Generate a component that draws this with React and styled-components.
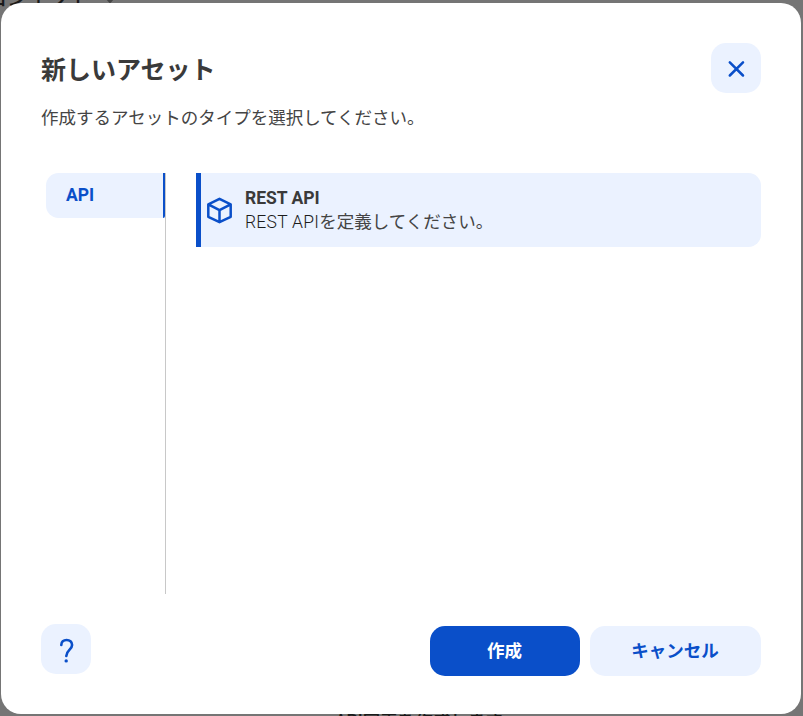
import styled, { createGlobalStyle } from "styled-components";

const GlobalStyle = createGlobalStyle`
  * {
    box-sizing: border-box;
  }
  body {
    margin: 0;
    background: #757575;
    color: #3a3a3a;
    font-family: Roboto, "Noto Sans CJK JP", sans-serif;
    font-size: 17.5px;
    overflow: hidden;
  }
  h2, p, ul {
    margin: 0;
    padding: 0;
  }
  button {
    border: 0;
    padding: 0;
    font: inherit;
    cursor: pointer;
  }
`
const Page = styled.div`
  position: relative;
  height: 716px;
  padding: 3px 2px 2px 1px;
  overflow: hidden;
`
const BehindText = styled.span`
  position: absolute;
  left: ${({$left}) => $left}px;
  top: ${({$top}) => $top}px;
  color: #1a1a1a;
  font-size: ${({$size}) => $size}px;
  font-weight: 500;
  line-height: 24px;
  white-space: nowrap;
`
const BehindChevron = styled.svg`
  position: absolute;
  left: 104px;
  top: -4px;
`
const Dialog = styled.section`
  position: relative;
  display: flex;
  flex-direction: column;
  width: 800px;
  height: 711px;
  padding: 40px 40px 38px;
  background: #fff;
  border-radius: 20px;
`
const Header = styled.header`
  display: flex;
  justify-content: space-between;
  align-items: flex-start;
  height: 130px;
`
const Title = styled.h2`
  padding-top: 10px;
  font-size: 25px;
  font-weight: 700;
  line-height: 36px;
`
const Description = styled.p`
  margin-top: 16px;
  color: #444;
  line-height: 26px;
`
const IconButton = styled.button`
  display: flex;
  align-items: center;
  justify-content: center;
  width: 50px;
  height: 50px;
  color: #0a4fc9;
  background: #ebf2ff;
  border-radius: 15px;
`
const Content = styled.div`
  display: flex;
  gap: 30px;
  height: 421px;
`
const TabList = styled.ul`
  width: 125px;
  padding-left: 5px;
  border-right: 1px solid #c8c8c8;
  list-style: none;
`
const Tab = styled.li`
  height: 45px;
  padding-left: 20px;
  color: #0a4fc9;
  background: #ebf2ff;
  border-right: 2px solid #0a4fc9;
  border-radius: 12.5px 0 2px 12.5px;
  font-weight: 700;
  line-height: 44px;
`
const AssetOption = styled.div`
  display: flex;
  align-items: center;
  flex: 1;
  height: 74px;
  padding-left: 5px;
  background: #ebf2ff;
  border-left: 5px solid #0a4fc9;
  border-radius: 0 12.5px 12.5px 0;
`
const AssetText = styled.div`
  margin-left: 11px;
  line-height: 24px;
`
const AssetName = styled.p`
  font-weight: 700;
`
const AssetSummary = styled.p`
  color: #444;
`
const LightLatin = styled.span`
  color: #1c1c1c;
  font-weight: 300;
  letter-spacing: .25px;
`
const Footer = styled.footer`
  display: flex;
  justify-content: space-between;
  margin-top: 30px;
`
const Actions = styled.div`
  display: flex;
  gap: 10px;
  padding-top: 2px;
`
const ActionButton = styled.button`
  width: ${({$width}) => $width}px;
  height: 50px;
  padding: 0 1px 3px 0;
  color: ${({$primary}) => $primary ? '#fff' : '#0a4fc9'};
  background: ${({$primary}) => $primary ? '#0a4fc9' : '#ebf2ff'};
  border-radius: 15px;
  font-weight: 700;
`

const CloseIcon = () => (
  <svg width="20" height="20" viewBox="0 0 20 20" fill="none" stroke="currentColor" strokeWidth="2.5" strokeLinecap="round">
    <path d="M3.8 4.3 17 17.5M17 4.3 3.8 17.5" />
  </svg>
)
const HelpIcon = () => (
  <svg width="20" height="28" viewBox="0 0 20 28" fill="none" stroke="currentColor" strokeWidth="2.6" strokeLinecap="round">
    <path d="M5.3 9.9C5.3 6.8 7.5 5 10.6 5s5.5 1.9 5.5 5c0 4.8-5.8 5.2-5.8 11" />
    <circle cx="10.2" cy="25.9" r="1.7" fill="currentColor" stroke="none" />
  </svg>
)
const CubeIcon = () => (
  <svg width="28" height="28" viewBox="0 0 28 28" fill="none" stroke="currentColor" strokeWidth="2.5" strokeLinejoin="round" color="#0a4fc9">
    <path d="M13.5 2.8 24.7 8.3V20.8L13.5 26.2 2.3 20.8V8.3ZM2.3 8.3l11.2 5.8 11.2-5.8M13.5 14.1v12.1" />
  </svg>
)

export default function App() {
  return (
    <>
      <GlobalStyle />
      <Page>
        <BehindText $left={-35} $top={-14} $size={21}>プロジェクト</BehindText>
        <BehindChevron width="12" height="8" viewBox="0 0 12 8" fill="#444">
          <path d="M1 2h10L6 7.5Z" />
        </BehindChevron>
        <BehindText $left={335} $top={709} $size={17.5}>API定義を作成します</BehindText>
        <Dialog role="dialog" aria-modal="true">
          <Header>
            <div>
              <Title>新しいアセット</Title>
              <Description>作成するアセットのタイプを選択してください。</Description>
            </div>
            <IconButton aria-label="閉じる"><CloseIcon /></IconButton>
          </Header>
          <Content>
            <TabList>
              <Tab>API</Tab>
            </TabList>
            <AssetOption>
              <CubeIcon />
              <AssetText>
                <AssetName>REST API</AssetName>
                <AssetSummary><LightLatin>REST API</LightLatin>を定義してください。</AssetSummary>
              </AssetText>
            </AssetOption>
          </Content>
          <Footer>
            <IconButton aria-label="ヘルプ"><HelpIcon /></IconButton>
            <Actions>
              <ActionButton $width={150} $primary>作成</ActionButton>
              <ActionButton $width={171}>キャンセル</ActionButton>
            </Actions>
          </Footer>
        </Dialog>
      </Page>
    </>
  )
}
